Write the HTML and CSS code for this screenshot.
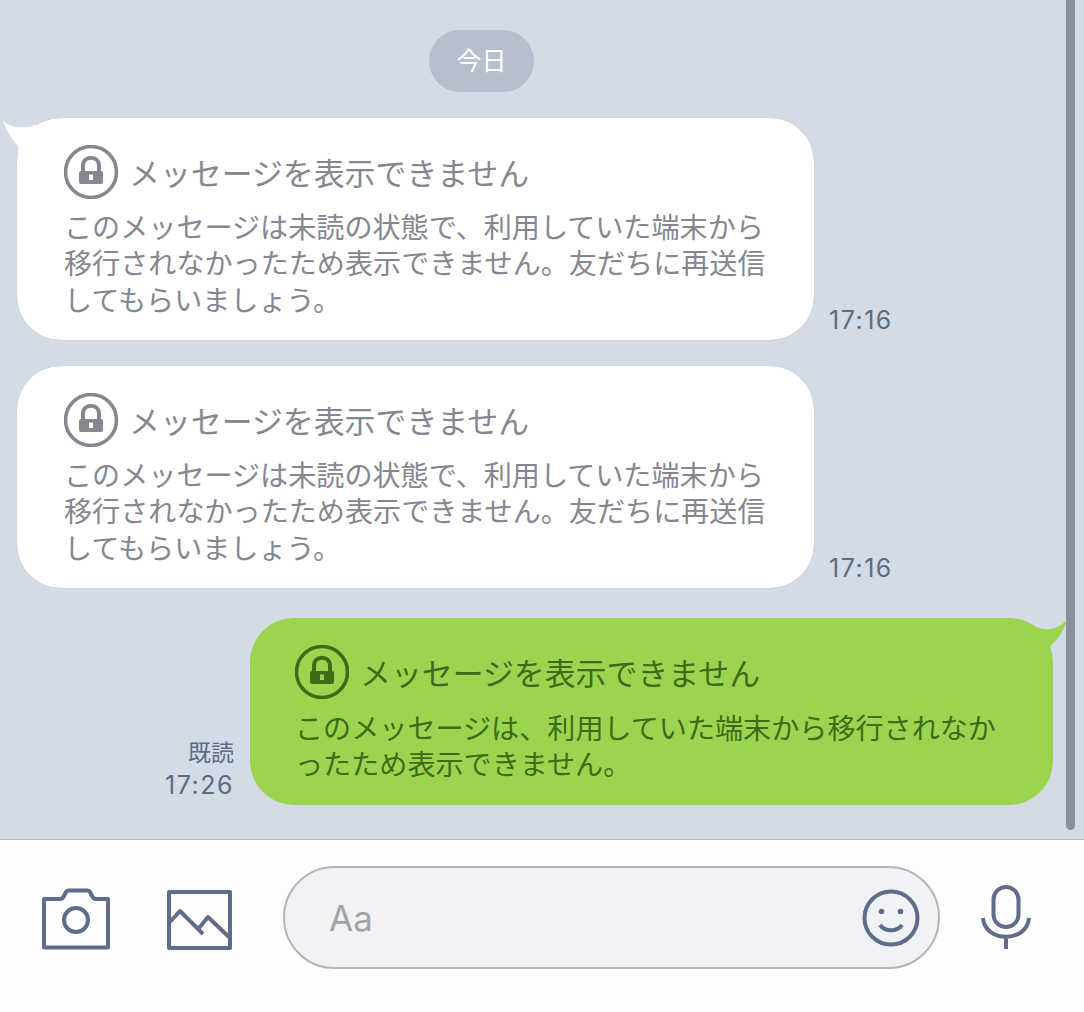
FILE: index.html
```html
<!DOCTYPE html>
<html lang="ja">
<head>
<meta charset="UTF-8">
<title>トーク</title>
<link rel="stylesheet" href="styles.css">
</head>
<body>

<div class="chat">
  <div class="scrollbar"></div>

  <div class="date">今日</div>

  <!-- 受信メッセージ -->
  <div class="row">
    <div class="bubble received first">
      <svg class="tail tail-left" width="38" height="40" viewBox="0 0 38 40"><path d="M2.500 2C9 9 20 12 36 7V40H18V28C12 22 6 12 2.500 2Z"/></svg>
      <div class="title">
        <svg class="lock" width="54" height="54" viewBox="0 0 54 54"><circle cx="27" cy="27" r="25.500"/><path class="shackle" d="M19 27V21C19 10 35 10 35 21V27"/><path class="body" fill-rule="evenodd" d="M17 26H37A2 2 0 0 1 39 28V37A2 2 0 0 1 37 39H17A2 2 0 0 1 15 37V28A2 2 0 0 1 17 26ZM25 29.500V35H29V29.500Z"/></svg>
        <span>メッセージを表示できません</span>
      </div>
      <p>このメッセージは未読の状態で、利用していた端末から<br>移行されなかったため表示できません。友だちに再送信<br>してもらいましょう。</p>
    </div>
    <div class="time">17:16</div>
  </div>

  <div class="row">
    <div class="bubble received">
      <div class="title">
        <svg class="lock" width="54" height="54" viewBox="0 0 54 54"><circle cx="27" cy="27" r="25.500"/><path class="shackle" d="M19 27V21C19 10 35 10 35 21V27"/><path class="body" fill-rule="evenodd" d="M17 26H37A2 2 0 0 1 39 28V37A2 2 0 0 1 37 39H17A2 2 0 0 1 15 37V28A2 2 0 0 1 17 26ZM25 29.500V35H29V29.500Z"/></svg>
        <span>メッセージを表示できません</span>
      </div>
      <p>このメッセージは未読の状態で、利用していた端末から<br>移行されなかったため表示できません。友だちに再送信<br>してもらいましょう。</p>
    </div>
    <div class="time">17:16</div>
  </div>

  <!-- 送信メッセージ -->
  <div class="row sent-row">
    <div class="meta">
      <div class="read">既読</div>
      <div class="time-sent">17:26</div>
    </div>
    <div class="bubble sent">
      <svg class="tail tail-right" width="34" height="30" viewBox="0 0 34 30"><path d="M0 8C10 13 22 13 33 2C30 12 24 22 15 29H0Z"/></svg>
      <div class="title">
        <svg class="lock" width="54" height="54" viewBox="0 0 54 54"><circle cx="27" cy="27" r="25.500"/><path class="shackle" d="M19 27V21C19 10 35 10 35 21V27"/><path class="body" fill-rule="evenodd" d="M17 26H37A2 2 0 0 1 39 28V37A2 2 0 0 1 37 39H17A2 2 0 0 1 15 37V28A2 2 0 0 1 17 26ZM25 29.500V35H29V29.500Z"/></svg>
        <span>メッセージを表示できません</span>
      </div>
      <p>このメッセージは、利用していた端末から移行されなか<br>ったため表示できません。</p>
    </div>
  </div>
</div>

<!-- 入力バー -->
<div class="bar">
  <svg class="icon camera" width="72" height="64" viewBox="0 0 72 64"><path d="M4 12H20C22 12 23 11 24 9L26 5C26.500 4 27 3.500 28 3.500H48C49 3.500 49.500 4 50 5L52 9C53 11 54 12 56 12H68V60.500H4Z"/><circle cx="36" cy="33" r="12"/></svg>
  <svg class="icon picture" width="67" height="61" viewBox="0 0 67 61"><rect x="3" y="3" width="61" height="56"/><path d="M3 34L14 22L37 45M33 39L42 28L64 49"/></svg>
  <div class="input">
    <span class="placeholder">Aa</span>
    <svg class="icon smile" width="58" height="58" viewBox="0 0 58 58"><circle cx="29" cy="29" r="26.500"/><circle class="eye" cx="19.500" cy="22.500" r="2.800"/><circle class="eye" cx="38.500" cy="22.500" r="2.800"/><path d="M18 36C23 43 35 43 40 36"/></svg>
  </div>
  <svg class="icon mic" width="54" height="65" viewBox="0 0 54 65"><rect x="14.500" y="2" width="25" height="40" rx="12.500"/><path d="M4 33C6 58 48 58 50 33M27 52V64"/></svg>
</div>

</body>
</html>
```

FILE: styles.css
```css
* {
  box-sizing: border-box;
}
body {
  margin: 0;
  width: 1084px;
  height: 1012px;
  overflow: hidden;
  font-family: "Noto Sans CJK JP", "Noto Sans", sans-serif;
  background: #fdfdfd;
}
.chat {
  position: relative;
  height: 840px;
  padding-top: 30px;
  background: #d2dbe6;
  border-bottom: 1px solid #b4b8bd;
}
.scrollbar {
  position: absolute;
  top: 0;
  left: 1066px;
  width: 9px;
  height: 830px;
  background: #8a919c;
  border-radius: 0 0 5px 5px;
}
.date {
  width: 105px;
  height: 62px;
  margin: 0 auto 26px 429px;
  background: #b6bfcb;
  border-radius: 31px;
  color: #fff;
  font-size: 25px;
  line-height: 59px;
  text-align: center;
}
.row {
  display: flex;
  align-items: flex-end;
  margin: 0 0 26px 17px;
}
.bubble {
  position: relative;
  height: 222px;
  padding: 27px 0 0 47px;
  border-radius: 44px;
}
.received {
  width: 797px;
  background: #fff;
  color: #85868f;
  box-shadow: 0 0 1px rgba(120, 130, 150, 0.5);
}
.sent {
  width: 803px;
  height: 187px;
  padding: 27px 0 0 45px;
  background: #9dd44f;
  color: #3c6c16;
}
.tail {
  position: absolute;
}
.tail-left {
  top: 0;
  left: -17px;
  fill: #fff;
}
.tail-right {
  top: 0;
  right: -15px;
  fill: #9dd44f;
}
.title {
  display: flex;
  align-items: center;
  gap: 11px;
  font-size: 30.900px;
  line-height: 54px;
}
.lock {
  flex: none;
}
.lock circle {
  fill: none;
  stroke: currentColor;
  stroke-width: 3.500;
}
.lock .shackle {
  fill: none;
  stroke: currentColor;
  stroke-width: 4;
}
.lock .body {
  fill: currentColor;
}
.bubble p {
  margin: 9px 0 0;
  font-size: 28.100px;
  line-height: 36.400px;
}
.sent p {
  margin-top: 10px;
  line-height: 35.500px;
}
.time {
  margin: 0 0 2px 15px;
  color: #5f6b80;
  font-family: "Inter", "Noto Sans", sans-serif;
  font-size: 25px;
  letter-spacing: 1.500px;
  line-height: 36px;
}
.sent-row {
  margin: 30px 0 0;
}
.meta {
  width: 234px;
  margin: 0 16px 2px 0;
  color: #5f6b80;
  text-align: right;
}
.read {
  font-size: 23px;
  line-height: 32px;
}
.time-sent {
  font-family: "Inter", "Noto Sans", sans-serif;
  font-size: 25px;
  letter-spacing: 1.500px;
  line-height: 36px;
}
.bar {
  display: flex;
  align-items: flex-start;
  height: 172px;
  padding: 26px 0 0 40px;
}
.icon {
  flex: none;
  fill: none;
  stroke: #606d8a;
  stroke-width: 4;
  stroke-linejoin: round;
}
.camera {
  margin: 21px 54px 0 0;
}
.picture {
  margin: 23px 50px 0 0;
}
.input {
  display: flex;
  align-items: center;
  justify-content: space-between;
  width: 657px;
  height: 103px;
  margin-right: 39px;
  padding: 0 18px 0 44px;
  background: #f1f2f5;
  border: 2px solid #b3b5b8;
  border-radius: 52px;
}
.placeholder {
  color: #a2a3a6;
  font-family: "Inter", "Noto Sans", sans-serif;
  font-size: 35px;
}
.smile .eye {
  fill: #606d8a;
  stroke: none;
}
.mic {
  margin-top: 19px;
}
```
